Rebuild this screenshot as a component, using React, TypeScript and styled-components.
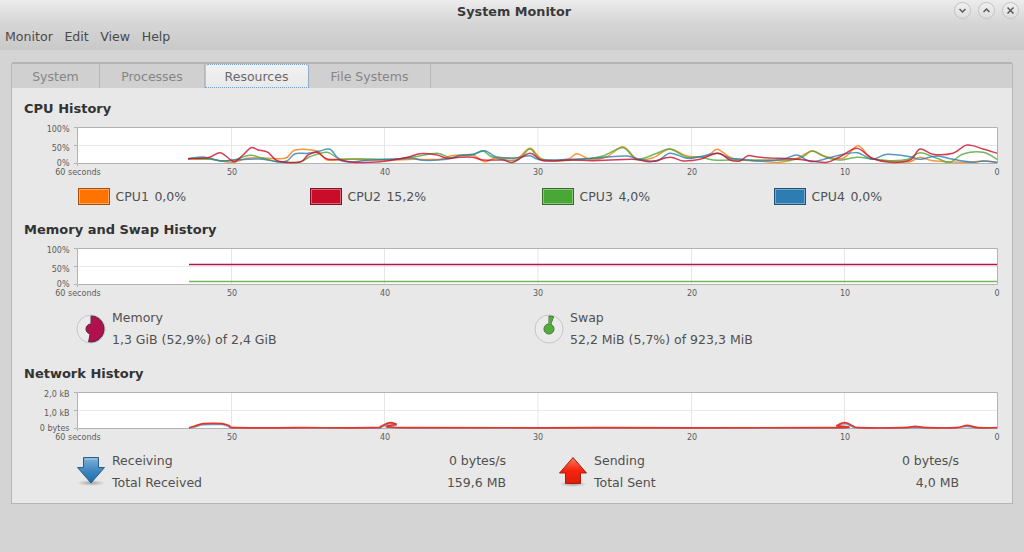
import React from 'react';
import styled, { createGlobalStyle } from 'styled-components';

type Point = [number, number];

const GlobalStyle = createGlobalStyle`
  html, body {
    margin: 0;
    height: 100%;
    overflow: hidden;
    background: #d4d4d4;
  }
  body {
    font-family: "DejaVu Sans", sans-serif;
    font-size: 12.5px;
    color: #505050;
  }
`;

const Window = styled.div`
  width: 1024px;
  height: 552px;
  display: flex;
  flex-direction: column;
`;

const Header = styled.header`
  height: 50px;
  background: linear-gradient(to bottom, #ececec 0%, #d6d6d6 45%, #c9c9c9 100%);
`;

const TitleBar = styled.div`
  height: 24px;
  display: flex;
  align-items: center;
  justify-content: center;
  position: relative;
`;

const Title = styled.h1`
  margin: 0 0 2px 4px;
  font-size: 12.8px;
  font-weight: 700;
  color: #3a3a3a;
`;

const WindowButtons = styled.div`
  position: absolute;
  right: 5px;
  top: 2px;
  display: flex;
  gap: 7px;
`;

const WindowButton = styled.button`
  width: 17px;
  height: 17px;
  padding: 0;
  border: 1px solid #c2c2c2;
  border-radius: 50%;
  background: linear-gradient(to bottom, #f0f0f0, #dedede);
  display: flex;
  align-items: center;
  justify-content: center;
`;

const MenuBar = styled.nav`
  height: 25px;
  display: flex;
  align-items: center;
  gap: 11.5px;
  padding-left: 5px;
`;

const MenuItem = styled.span`
  font-size: 12.6px;
  color: #4a4a4a;
`;

const Notebook = styled.main`
  width: 1002px;
  height: 442px;
  margin: 12px 0 0 11px;
  box-sizing: border-box;
  border: 1px solid #b4b4b4;
  border-top-width: 2px;
  border-radius: 3px 3px 0 0;
  background: #e8e8e8;
`;

const TabStrip = styled.div`
  height: 24px;
  display: flex;
  background: #d0d0d0;
`;

const Tab = styled.div<{ $width: number; $active?: boolean }>`
  width: ${({ $width }) => $width}px;
  box-sizing: border-box;
  display: flex;
  align-items: center;
  justify-content: center;
  font-size: 12.5px;
  color: ${({ $active }) => ($active ? '#696969' : '#868686')};
  border-right: 1px solid #b6b6b6;
  background: ${({ $active }) => ($active ? 'linear-gradient(to bottom, #f2f2f2, #e8e8e8)' : 'transparent')};
  outline: ${({ $active }) => ($active ? '1px dotted #6f9fd8' : 'none')};
  outline-offset: -1px;
  border-radius: ${({ $active }) => ($active ? '3px 3px 0 0' : '0')};
`;

const Panel = styled.div`
  padding: 11px 12px 0;
`;

const Section = styled.section<{ $gap: number }>`
  margin-bottom: ${({ $gap }) => $gap}px;
`;

const Heading = styled.h2`
  margin: 0 0 3px;
  height: 18px;
  line-height: 20px;
  font-size: 13px;
  font-weight: 700;
  color: #333;
`;

const ChartSvg = styled.svg`
  display: block;
  width: 976px;
  height: 58px;
`;

const AxisLabel = styled.text`
  font-family: "DejaVu Sans", sans-serif;
  font-size: 8px;
  fill: #5c5c5c;
`;

const Legend = styled.div`
  display: grid;
  grid-template-columns: repeat(4, 232px);
  padding-left: 54px;
  margin-top: 10px;
`;

const LegendItem = styled.div`
  display: flex;
  align-items: center;
  gap: 5.5px;
  height: 17px;
`;

const Swatch = styled.span<{ $color: string; $edge: string }>`
  width: 32px;
  height: 17px;
  box-sizing: border-box;
  border: 1px solid ${({ $edge }) => $edge};
  background: ${({ $color }) => $color};
  box-shadow: inset 0 0 0 1px rgba(255, 255, 255, 0.35);
`;

const UsageRow = styled.div`
  display: grid;
  grid-template-columns: 458px 1fr;
  padding-left: 52px;
  margin-top: 8px;
`;

const Usage = styled.div`
  display: flex;
  align-items: center;
  gap: 6px;
`;

const Lines = styled.div`
  display: flex;
  flex-direction: column;
`;

const Line = styled.div`
  height: 22px;
  line-height: 22px;
  white-space: nowrap;
`;

const NetworkRow = styled.div`
  display: grid;
  grid-template-columns: 430px 401px;
  column-gap: 52px;
  padding-left: 52px;
  margin-top: 7px;
`;

const NetworkCell = styled.div`
  display: grid;
  grid-template-columns: 36px 1fr auto;
  align-items: center;
`;

const NetworkValues = styled(Lines)`
  text-align: right;
`;

// catmull-rom through the traced samples, gives the soft curves of the graph
const smooth = (pts: Point[]): string => {
  let d = `M${pts[0][0]} ${pts[0][1]}`;
  for (let i = 0; i < pts.length - 1; i++) {
    const p0 = pts[i - 1] || pts[i];
    const p1 = pts[i];
    const p2 = pts[i + 1];
    const p3 = pts[i + 2] || p2;
    const c1x = p1[0] + (p2[0] - p0[0]) / 6;
    const c1y = p1[1] + (p2[1] - p0[1]) / 6;
    const c2x = p2[0] - (p3[0] - p1[0]) / 6;
    const c2y = p2[1] - (p3[1] - p1[1]) / 6;
    d += ` C${c1x.toFixed(1)} ${c1y.toFixed(1)} ${c2x.toFixed(1)} ${c2y.toFixed(1)} ${p2[0]} ${p2[1]}`;
  }
  return d;
};

const shift = (pts: number[], top: number): Point[] => {
  const out: Point[] = [];
  for (let i = 0; i < pts.length; i += 2) out.push([pts[i], +(pts[i + 1] - top).toFixed(1)]);
  return out;
};

const CPU_TOP = 120;

const cpuOrange = shift([
  188,159, 208,158.3, 217,160.3, 233,162.3, 247,158.3, 260,157.7, 285,158.3, 295,150, 317,151, 327,160, 347,159,
  367,160, 393,160, 413,159.3, 440,159.3, 450,156, 460,155, 473,155, 485,161.7, 497,157.3, 517,158.3, 530,148.3,
  543,159.3, 567,159.3, 577,153.7, 590,159.3, 607,156.7, 623,146.7, 637,159.3, 653,157.7, 670,149, 687,156,
  707,156, 717,149.3, 730,157.3, 740,160, 760,161, 780,162.3, 797,158.3, 812,151, 823,155.7, 843,158.3, 858,145.7,
  872,158.3, 897,161.7, 910,161.7, 920,157.3, 933,160.7, 967,162.3, 983,161, 997,162.3,
], CPU_TOP);

const cpuRed = shift([
  188,158.7, 208,157.7, 220,152.7, 230,159.3, 235,161.7, 243,155, 251,147.7, 258,150, 268,152.3, 278,161, 300,162,
  308,155, 317,152.3, 327,159, 340,159.7, 353,162.3, 380,161.7, 407,157.3, 420,153.7, 437,155, 447,158.3, 460,157.3,
  473,157.3, 483,160, 503,160, 513,162.3, 530,153.3, 543,160.7, 573,160, 593,160.7, 633,159.3, 650,161.7, 670,157.3,
  683,161, 700,159.3, 718,153.3, 730,160, 740,161, 748,155.7, 760,157.3, 797,159.3, 812,161, 827,162.3, 840,156.7,
  857,148.3, 872,158.3, 890,162.3, 910,160, 920,149, 933,154.3, 953,153.3, 967,145, 983,149, 997,153.3,
], CPU_TOP);

const cpuGreen = shift([
  188,158.7, 210,159.3, 220,160.7, 233,160.3, 250,155.3, 263,158.3, 280,162, 300,162, 310,156.7, 327,152.3, 340,159,
  360,158.7, 393,159.3, 413,157, 437,153.3, 450,157.7, 460,155.6, 473,155, 483,150.7, 493,157.3, 517,160, 530,149,
  543,160, 583,159.3, 603,156, 623,147.7, 637,159.3, 657,153.3, 670,149, 687,157.3, 700,156.7, 713,160, 740,160,
  760,160, 797,159.3, 812,151, 827,157.7, 840,160, 857,157.3, 872,159, 890,160.7, 908,159.3, 920,152.7, 937,158.3,
  950,162.3, 963,154, 983,152.3, 997,159.3,
], CPU_TOP);

const cpuBlue = shift([
  188,158.7, 203,157, 213,159.3, 223,161, 233,160, 260,159, 277,161.7, 287,161, 295,153.7, 308,153.3, 320,151,
  330,149.3, 340,160, 353,162, 367,160.3, 393,159.3, 413,158.3, 423,160.3, 447,159.3, 460,155.6, 473,154.3, 485,150.7,
  497,157.3, 517,157.7, 530,155.7, 543,160, 593,158.3, 610,156.7, 627,156, 640,159.3, 657,161, 670,153.3, 687,158.3,
  700,156.7, 717,153.3, 730,158.3, 740,159, 760,161, 783,159.3, 797,155, 812,161.7, 837,155.7, 857,152.7, 872,159.3,
  887,154.3, 910,156.7, 920,159.3, 937,156, 953,159.3, 973,162.3, 983,161, 997,162.3,
], CPU_TOP);

const netRed: Point[] = [
  [189,42.7],[195,41],[202,38.8],[212,38.4],[222,38.6],[229,40.5],[237,42.7],[300,42.7],[372,42.7],[381,41.2],[387,38.4],[391,37.6],[396,39],[403,42.7],
  [600,42.7],[830,42.7],[837,40.5],[842,38],[847,38],[853,41],[860,42.7],[903,42.7],[915,41.4],[927,42.7],[956,42.7],[967,40.4],[978,42.7],[997,42.7],
];
const netBlue: Point[] = netRed.map(([x, y]) => [x, y < 42 ? y + 1 : y]);

const GRID_X = [231.5, 384.5, 538, 691.5, 844.5];
const X_LABELS: [number, string][] = [[232, '50'], [385, '40'], [538, '30'], [692, '20'], [845, '10'], [997, '0']];

interface Series {
  color: string;
  width?: number;
  opacity?: number;
  d: string;
}

const Chart: React.FC<{ yLabels: string[]; series: Series[] }> = ({ yLabels, series }) => (
  <ChartSvg viewBox="24 0 976 58">
    <rect x="77" y="7" width="921" height="37" fill="#fff" />
    <path d="M77 25.5H997" stroke="#e9e9e9" fill="none" />
    {GRID_X.map((x) => (
      <path key={x} d={`M${x} 7V43`} stroke="#e6e6e6" fill="none" />
    ))}
    <path d="M77.5 43.5V7.5H997.5V43.5H77.5" stroke="#b2b2b2" fill="none" />
    <path d="M74 7.5H77M74 25.5H77M74 43.5H77M77.5 44V46" stroke="#b2b2b2" fill="none" />
    {series.map((s) => (
      <path
        key={s.color}
        d={s.d}
        stroke={s.color}
        strokeWidth={s.width ?? 1.5}
        strokeOpacity={s.opacity ?? 0.8}
        fill="none"
      />
    ))}
    {yLabels.map((label, i) => (
      <AxisLabel key={label} x="69.5" y={[12, 31, 46][i]} textAnchor="end">{label}</AxisLabel>
    ))}
    <AxisLabel x="78" y="55" textAnchor="middle">60 seconds</AxisLabel>
    {X_LABELS.map(([x, label]) => (
      <AxisLabel key={label} x={x} y="55" textAnchor="middle">{label}</AxisLabel>
    ))}
  </ChartSvg>
);

// usage dial: wedge from twelve o'clock plus the small hub disc
const Dial: React.FC<{ percent: number; color: string; edge: string }> = ({ percent, color, edge }) => {
  const a = (percent / 100) * 2 * Math.PI;
  const large = percent > 50 ? 1 : 0;
  const wedge = (r: number) =>
    `M15 15V${15 - r}A${r} ${r} 0 ${large} 1 ${(15 + r * Math.sin(a)).toFixed(2)} ${(15 - r * Math.cos(a)).toFixed(2)}Z`;
  return (
    <svg width="30" height="30" viewBox="0 0 30 30">
      <circle cx="15" cy="15" r="14" fill="#ebebeb" stroke="#c6c6c6" />
      <path d={wedge(13)} fill={color} stroke={edge} />
      <circle cx="15" cy="15" r="5" fill={color} stroke={edge} />
      <path d={wedge(12)} fill={color} />
      <circle cx="15" cy="15" r="4.5" fill={color} />
    </svg>
  );
};

const DownArrow = () => (
  <svg width="30" height="32" viewBox="0 0 30 32">
    <defs>
      <linearGradient id="downFill" x1="0" y1="0" x2="0" y2="1">
        <stop offset="0" stopColor="#7fb2d8" />
        <stop offset="0.55" stopColor="#3a85bd" />
        <stop offset="1" stopColor="#1f6aa3" />
      </linearGradient>
      <radialGradient id="downShadow">
        <stop offset="0" stopColor="#000" stopOpacity="0.3" />
        <stop offset="1" stopColor="#000" stopOpacity="0" />
      </radialGradient>
    </defs>
    <ellipse cx="15" cy="27" rx="14" ry="3" fill="url(#downShadow)" />
    <path d="M7.5 1.5H22.5V11.5H28.5L15 27L1.5 11.5H7.5Z" fill="url(#downFill)" stroke="#2a5f8c" strokeLinejoin="round" />
    <path d="M9 3H21" stroke="#a9cce6" fill="none" />
  </svg>
);

const UpArrow = () => (
  <svg width="30" height="32" viewBox="0 0 30 32">
    <defs>
      <linearGradient id="upFill" x1="0" y1="0" x2="0" y2="1">
        <stop offset="0" stopColor="#f87a5c" />
        <stop offset="0.5" stopColor="#f4240e" />
        <stop offset="1" stopColor="#e01d08" />
      </linearGradient>
      <radialGradient id="upShadow">
        <stop offset="0" stopColor="#000" stopOpacity="0.3" />
        <stop offset="1" stopColor="#000" stopOpacity="0" />
      </radialGradient>
    </defs>
    <ellipse cx="15" cy="28" rx="14" ry="3" fill="url(#upShadow)" />
    <path d="M15 1.5L28.5 17H22.5V27.5H7.5V17H1.5Z" fill="url(#upFill)" stroke="#a3200f" strokeLinejoin="round" />
  </svg>
);

const ControlIcon: React.FC<{ d: string }> = ({ d }) => (
  <svg width="9" height="9" viewBox="0 0 9 9">
    <path d={d} stroke="#5a5a5a" strokeWidth="1.5" fill="none" />
  </svg>
);

const App: React.FC = () => (
  <>
    <GlobalStyle />
    <Window>
      <Header>
        <TitleBar>
          <Title>System Monitor</Title>
          <WindowButtons>
            <WindowButton><ControlIcon d="M1.5 3L4.5 6L7.5 3" /></WindowButton>
            <WindowButton><ControlIcon d="M1.5 6L4.5 3L7.5 6" /></WindowButton>
            <WindowButton><ControlIcon d="M1.5 1.5L7.5 7.5M7.5 1.5L1.5 7.5" /></WindowButton>
          </WindowButtons>
        </TitleBar>
        <MenuBar>
          <MenuItem>Monitor</MenuItem>
          <MenuItem>Edit</MenuItem>
          <MenuItem>View</MenuItem>
          <MenuItem>Help</MenuItem>
        </MenuBar>
      </Header>
      <Notebook>
        <TabStrip>
          <Tab $width={88}>System</Tab>
          <Tab $width={105}>Processes</Tab>
          <Tab $width={104} $active>Resources</Tab>
          <Tab $width={122}>File Systems</Tab>
        </TabStrip>
        <Panel>
          <Section $gap={15}>
            <Heading>CPU History</Heading>
            <Chart
              yLabels={['100%', '50%', '0%']}
              series={[
                { color: '#ff7a0a', d: smooth(cpuOrange) },
                { color: '#4ba837', d: smooth(cpuGreen) },
                { color: '#2d7db3', d: smooth(cpuBlue) },
                { color: '#cc0c2c', d: smooth(cpuRed) },
              ]}
            />
            <Legend>
              <LegendItem>
                <Swatch $color="#ff7400" $edge="#9c5212" />
                <span>CPU1</span><span>0,0%</span>
              </LegendItem>
              <LegendItem>
                <Swatch $color="#cb0c29" $edge="#7d1426" />
                <span>CPU2</span><span>15,2%</span>
              </LegendItem>
              <LegendItem>
                <Swatch $color="#49a835" $edge="#3b6b30" />
                <span>CPU3</span><span>4,0%</span>
              </LegendItem>
              <LegendItem>
                <Swatch $color="#2d7db3" $edge="#24506f" />
                <span>CPU4</span><span>0,0%</span>
              </LegendItem>
            </Legend>
          </Section>
          <Section $gap={13}>
            <Heading>Memory and Swap History</Heading>
            <Chart
              yLabels={['100%', '50%', '0%']}
              series={[
                { color: '#b3134f', width: 1.3, opacity: 1, d: 'M189 23.5H997' },
                { color: '#62b04c', width: 1.5, opacity: 0.9, d: 'M189 40.5H997' },
              ]}
            />
            <UsageRow>
              <Usage>
                <Dial percent={52.9} color="#b0124f" edge="#4a2a38" />
                <Lines>
                  <Line>Memory</Line>
                  <Line>1,3 GiB (52,9%) of 2,4 GiB</Line>
                </Lines>
              </Usage>
              <Usage>
                <Dial percent={5.7} color="#55ab3f" edge="#3f6f33" />
                <Lines>
                  <Line>Swap</Line>
                  <Line>52,2 MiB (5,7%) of 923,3 MiB</Line>
                </Lines>
              </Usage>
            </UsageRow>
          </Section>
          <Section $gap={0}>
            <Heading>Network History</Heading>
            <Chart
              yLabels={['2,0 kB', '1,0 kB', '0 bytes']}
              series={[
                { color: '#3f8cc4', d: smooth(netBlue) },
                { color: '#e5352b', width: 1.7, opacity: 1, d: smooth(netRed) },
              ]}
            />
            <NetworkRow>
              <NetworkCell>
                <DownArrow />
                <Lines>
                  <Line>Receiving</Line>
                  <Line>Total Received</Line>
                </Lines>
                <NetworkValues>
                  <Line>0 bytes/s</Line>
                  <Line>159,6 MB</Line>
                </NetworkValues>
              </NetworkCell>
              <NetworkCell>
                <UpArrow />
                <Lines>
                  <Line>Sending</Line>
                  <Line>Total Sent</Line>
                </Lines>
                <NetworkValues>
                  <Line>0 bytes/s</Line>
                  <Line>4,0 MB</Line>
                </NetworkValues>
              </NetworkCell>
            </NetworkRow>
          </Section>
        </Panel>
      </Notebook>
    </Window>
  </>
);

export default App;
